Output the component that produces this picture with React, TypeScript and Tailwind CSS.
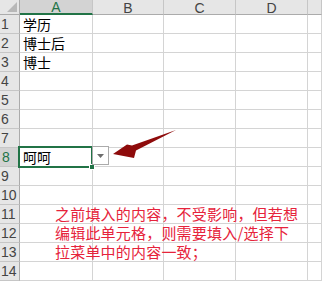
import React from 'react';

const cols = ['A', 'B', 'C', 'D', ''];
const rows = Array.from({ length: 14 }, (_, i) => i + 1);

const values: Record<number, string> = {
  1: '学历',
  2: '博士后',
  3: '博士',
  8: '呵呵',
};

const App = () => {
  return (
    <div className="relative w-[322px] h-[281px] overflow-hidden bg-white font-['Liberation_Sans','Noto_Sans_CJK_SC',sans-serif]">
      <div className="grid grid-cols-[20px_73px_71px_72px_72px_14px] grid-rows-[15px_repeat(14,19px)]">
        {/* corner */}
        <div className="relative bg-[#e6e6e6] border-r border-b border-[#ababab]">
          <svg className="absolute right-[2px] bottom-[2px]" width="10" height="10" viewBox="0 0 10 10">
            <polygon points="10,0 10,10 0,10" fill="#b8b8b8" />
          </svg>
        </div>
        {cols.map((c, i) =>
          i === 0 ? (
            <div
              key={c}
              className="flex items-center justify-center bg-[#d3d3d3] border-r border-[#c6c6c6] border-b-2 border-b-[#217346] text-[14px] leading-none text-[#217346] pt-[1px]"
            >
              {c}
            </div>
          ) : (
            <div
              key={'h' + i}
              className="flex items-center justify-center bg-[#e6e6e6] border-r border-[#c6c6c6] border-b border-b-[#ababab] text-[14px] leading-none text-[#444] pt-[1px]"
            >
              {c}
            </div>
          )
        )}
        {rows.map((r) => (
          <React.Fragment key={r}>
            {r === 8 ? (
              <div className="flex items-center pl-[2px] bg-[#d3d3d3] border-b border-[#c6c6c6] border-r-2 border-r-[#217346] text-[14px] leading-none text-[#217346]">
                {r}
              </div>
            ) : (
              <div className="flex items-center pl-[1px] bg-[#e6e6e6] border-b border-[#c6c6c6] border-r border-r-[#ababab] text-[14px] leading-none text-[#444]">
                {r}
              </div>
            )}
            {cols.map((_, ci) => (
              <div
                key={ci}
                className="flex items-center pl-[3px] border-r border-b border-[#d4d4d4] text-[14px] leading-none text-black font-['Noto_Sans_CJK_SC',sans-serif] whitespace-nowrap"
              >
                {ci === 0 ? values[r] ?? '' : ''}
              </div>
            ))}
          </React.Fragment>
        ))}
      </div>

      {/* active cell A8 */}
      <div className="absolute left-[18px] top-[146px] w-[75px] h-[22px] border-2 border-[#217346]" />
      <div className="absolute left-[89px] top-[164px] w-[6px] h-[6px] bg-[#217346] border border-white" />

      {/* dropdown button */}
      <div className="absolute left-[92px] top-[146px] w-[17px] h-[19px] bg-white border border-[#ababab] flex items-center justify-center">
        <svg width="7" height="4" viewBox="0 0 7 4">
          <polygon points="0,0 7,0 3.5,4" fill="#6d6d6d" />
        </svg>
      </div>

      {/* arrow */}
      <svg className="absolute left-0 top-0" width="322" height="281" viewBox="0 0 322 281">
        <polygon
          points="113,154 127,144.5 132,145.5 176,130 136,150.5 134,158"
          fill="#8e0b0b"
        />
      </svg>

      {/* note */}
      <div className="absolute left-[55px] top-[204px] flex flex-col text-[15px] leading-[19px] tracking-[0.2px] text-[#e6233b] font-['Noto_Sans_CJK_SC',sans-serif] whitespace-nowrap">
        <span>之前填入的内容，不受影响，但若想</span>
        <span>编辑此单元格，则需要填入/选择下</span>
        <span>拉菜单中的内容一致；</span>
      </div>
    </div>
  );
};

export default App;
